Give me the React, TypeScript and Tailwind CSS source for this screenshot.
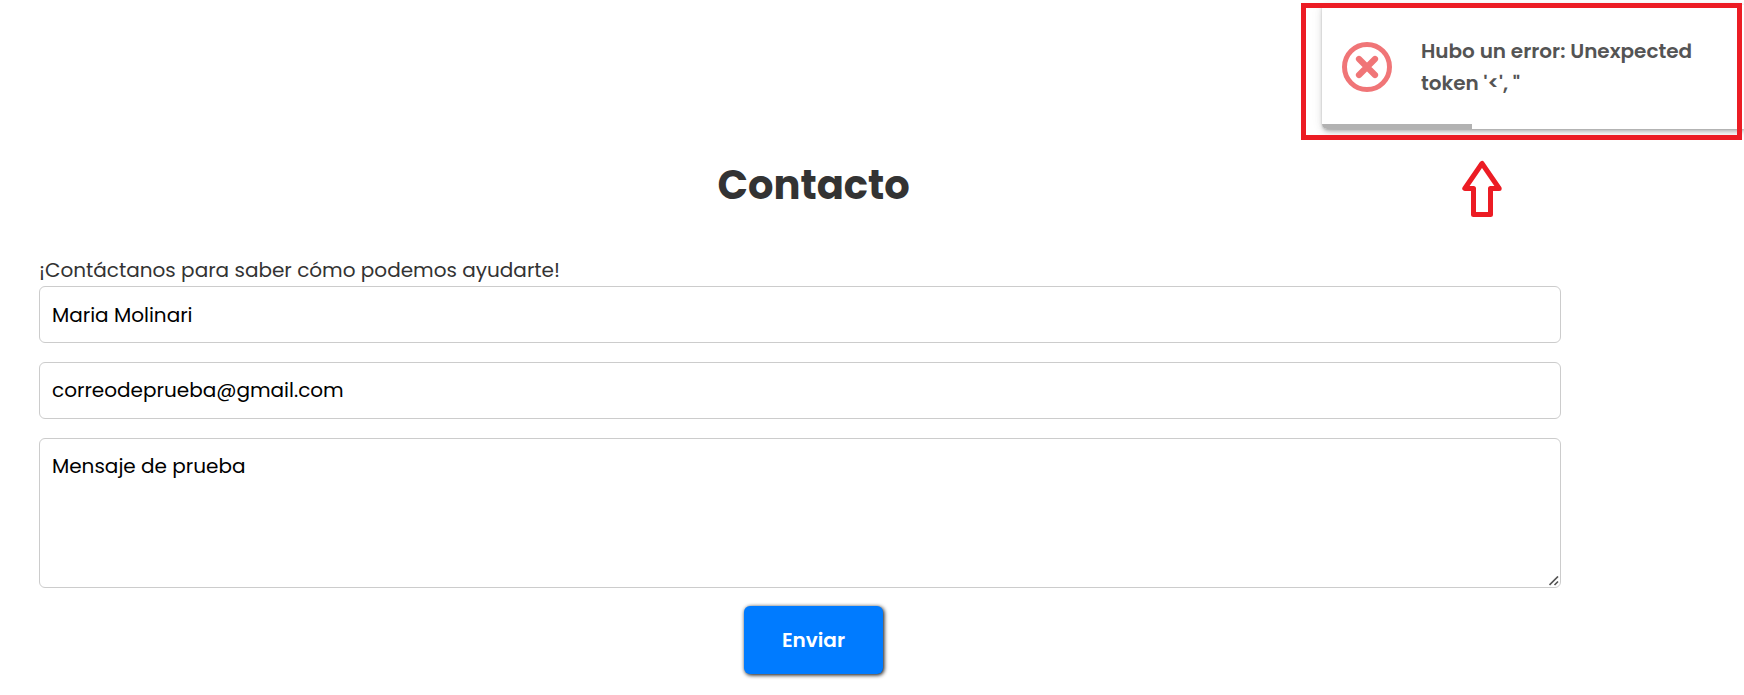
function Toast() {
  return (
    <div className="absolute left-[1322px] top-[5px] flex h-[124px] w-[422px] overflow-hidden rounded-bl-[5px] bg-white shadow-[0_0_1px_rgba(0,0,0,0.08),0_1px_2px_rgba(0,0,0,0.08),1px_2px_4px_rgba(0,0,0,0.2),1px_3px_8px_rgba(0,0,0,0.12),0_0_14px_rgba(0,0,0,0.06)]">
      <svg viewBox="0 0 50 50" className="ml-5 mt-[37px] size-[50px] shrink-0" fill="none" stroke="#f07577">
        <circle cx="25" cy="25" r="22.5" strokeWidth="5" />
        <path d="M17 17 L33 33 M33 17 L17 33" strokeWidth="6.2" strokeLinecap="round" />
      </svg>
      <h2 className="ml-[29px] mt-[30px] whitespace-nowrap text-[20px] font-semibold leading-8 text-[#545454]">
        <span className="block">Hubo un error: Unexpected</span>
        <span className="block">token '&lt;', "</span>
      </h2>
      <div className="absolute bottom-0 left-0 h-[5px] w-[150px] bg-[#b2b2b2]" />
    </div>
  );
}

export default function App() {
  return (
    <div className="relative h-[695px] w-[1744px] overflow-hidden bg-white font-['Poppins','Inter',sans-serif] text-[20px] text-[#333]">
      <section className="flex w-[1561px] flex-col pl-[39px] pt-[155px]">
        <h1 className="ml-[678.5px] text-[40px] font-bold leading-[60px]">Contacto</h1>
        <p className="mt-10 h-[31px] whitespace-nowrap leading-[31px]">¡Contáctanos para saber cómo podemos ayudarte!</p>
        <form className="flex flex-col text-black" onSubmit={(e) => e.preventDefault()}>
          <input
            type="text"
            defaultValue="Maria Molinari"
            className="h-[57px] rounded-[6px] border border-[#ccc] px-3 outline-none"
          />
          <input
            type="email"
            defaultValue="correodeprueba@gmail.com"
            className="mt-[19px] h-[57px] rounded-[6px] border border-[#ccc] px-3 pb-0.5 outline-none"
          />
          <div className="relative mt-[19px] h-[150px]">
            <textarea
              defaultValue="Mensaje de prueba"
              className="block size-full resize-none rounded-[6px] border border-[#ccc] px-3 py-3 leading-[30px] outline-none"
            />
            <svg viewBox="0 0 10 10" className="absolute bottom-[2px] right-[2px] size-[10px]" stroke="#555" strokeWidth="1.7">
              <path d="M0.5 9 L9 0.5 M5.5 9 L9 5.5" />
            </svg>
          </div>
          <button className="ml-[705px] mt-[18px] h-[68px] w-[139px] rounded-[6px] bg-[#007bff] font-semibold text-white shadow-[1px_1px_4px_#000]">
            Enviar
          </button>
        </form>
      </section>
      <Toast />
      <div className="absolute left-[1301px] top-[3px] h-[137px] w-[441px] border-5 border-[#ec1c24]" />
      <svg viewBox="0 0 44 60" className="absolute left-[1460px] top-[159px] h-[60px] w-[44px]" fill="none" stroke="#ec1c24" strokeWidth="5">
        <path d="M22 4.5 L4.8 29.5 H13.5 V55.5 H30.5 V29.5 H39.2 Z" strokeLinejoin="round" />
      </svg>
    </div>
  );
}
